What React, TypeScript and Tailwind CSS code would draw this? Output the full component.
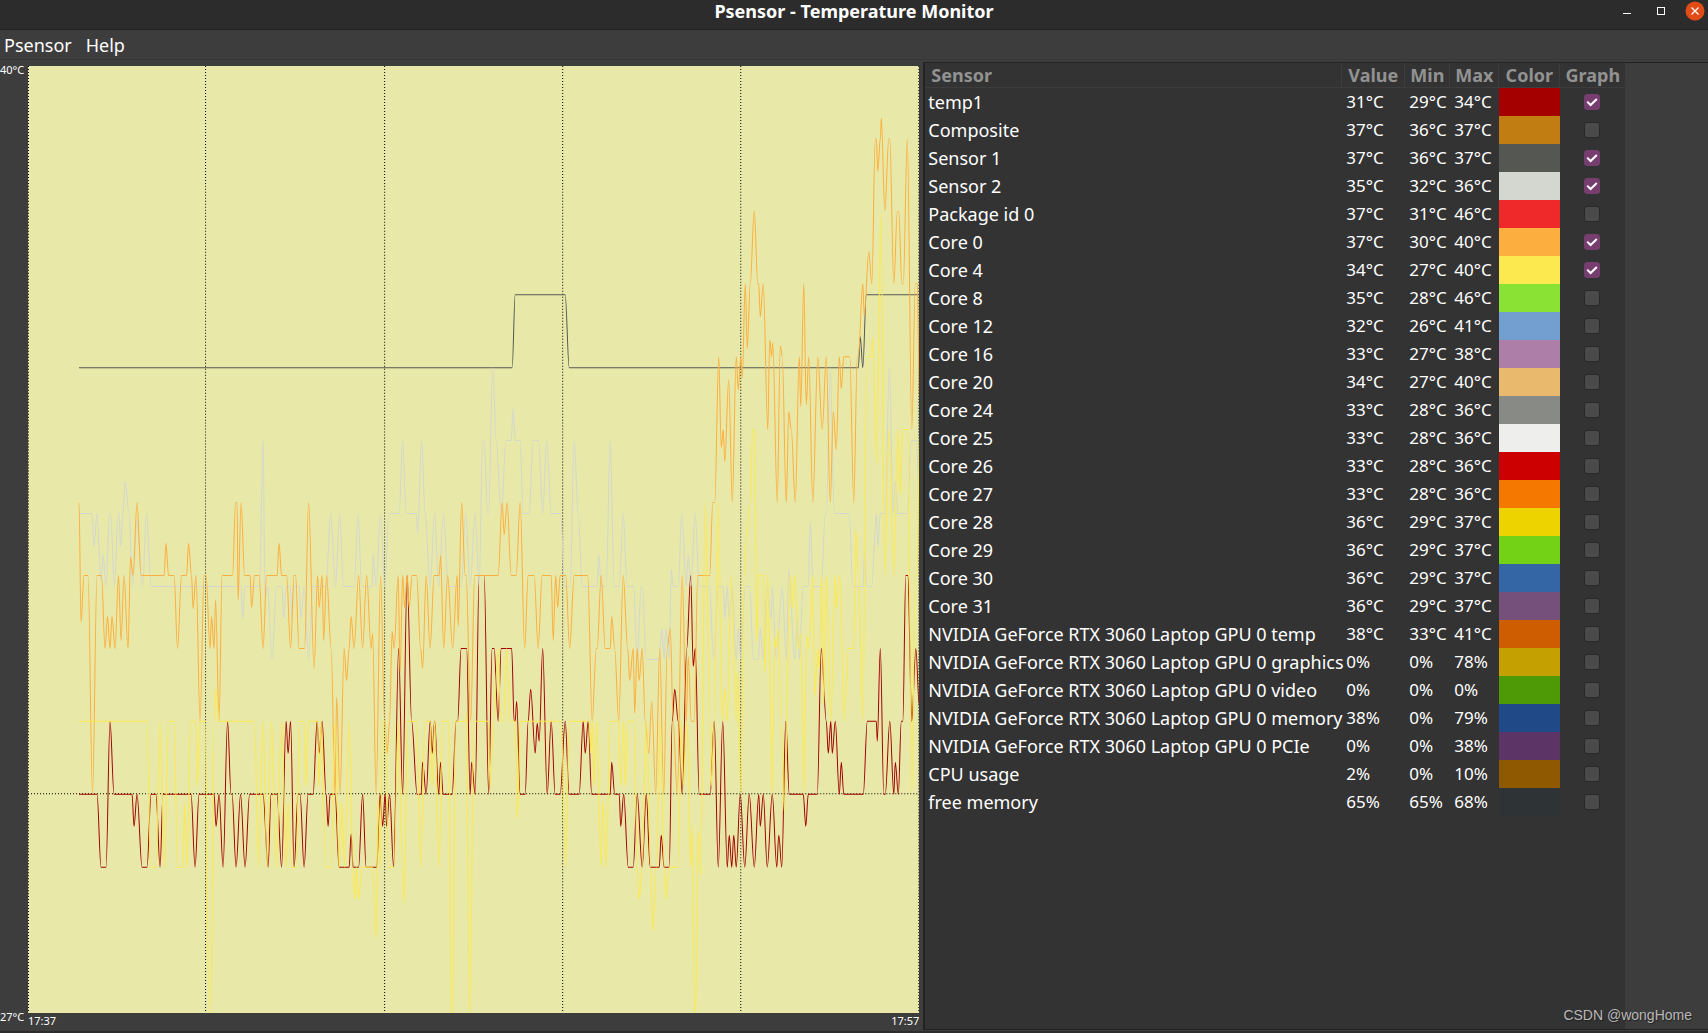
import { useState } from 'react';
import clsx from 'clsx';

type Sensor = {
  name: string;
  value: string;
  min: string;
  max: string;
  color: string;
  graph?: boolean;
};

const initialSensors: Sensor[] = [
  { name: 'temp1', value: '31°C', min: '29°C', max: '34°C', color: 'bg-[#a40000]', graph: true },
  { name: 'Composite', value: '37°C', min: '36°C', max: '37°C', color: 'bg-[#c17d11]' },
  { name: 'Sensor 1', value: '37°C', min: '36°C', max: '37°C', color: 'bg-[#555753]', graph: true },
  { name: 'Sensor 2', value: '35°C', min: '32°C', max: '36°C', color: 'bg-[#d3d7cf]', graph: true },
  { name: 'Package id 0', value: '37°C', min: '31°C', max: '46°C', color: 'bg-[#ef2929]' },
  { name: 'Core 0', value: '37°C', min: '30°C', max: '40°C', color: 'bg-[#fcaf3e]', graph: true },
  { name: 'Core 4', value: '34°C', min: '27°C', max: '40°C', color: 'bg-[#fce94f]', graph: true },
  { name: 'Core 8', value: '35°C', min: '28°C', max: '46°C', color: 'bg-[#8ae234]' },
  { name: 'Core 12', value: '32°C', min: '26°C', max: '41°C', color: 'bg-[#729fcf]' },
  { name: 'Core 16', value: '33°C', min: '27°C', max: '38°C', color: 'bg-[#ad7fa8]' },
  { name: 'Core 20', value: '34°C', min: '27°C', max: '40°C', color: 'bg-[#e9b96e]' },
  { name: 'Core 24', value: '33°C', min: '28°C', max: '36°C', color: 'bg-[#888a85]' },
  { name: 'Core 25', value: '33°C', min: '28°C', max: '36°C', color: 'bg-[#eeeeec]' },
  { name: 'Core 26', value: '33°C', min: '28°C', max: '36°C', color: 'bg-[#cc0000]' },
  { name: 'Core 27', value: '33°C', min: '28°C', max: '36°C', color: 'bg-[#f57900]' },
  { name: 'Core 28', value: '36°C', min: '29°C', max: '37°C', color: 'bg-[#edd400]' },
  { name: 'Core 29', value: '36°C', min: '29°C', max: '37°C', color: 'bg-[#73d216]' },
  { name: 'Core 30', value: '36°C', min: '29°C', max: '37°C', color: 'bg-[#3465a4]' },
  { name: 'Core 31', value: '36°C', min: '29°C', max: '37°C', color: 'bg-[#75507b]' },
  { name: 'NVIDIA GeForce RTX 3060 Laptop GPU 0 temp', value: '38°C', min: '33°C', max: '41°C', color: 'bg-[#ce5c00]' },
  { name: 'NVIDIA GeForce RTX 3060 Laptop GPU 0 graphics', value: '0%', min: '0%', max: '78%', color: 'bg-[#c4a000]' },
  { name: 'NVIDIA GeForce RTX 3060 Laptop GPU 0 video', value: '0%', min: '0%', max: '0%', color: 'bg-[#4e9a06]' },
  { name: 'NVIDIA GeForce RTX 3060 Laptop GPU 0 memory', value: '38%', min: '0%', max: '79%', color: 'bg-[#204a87]' },
  { name: 'NVIDIA GeForce RTX 3060 Laptop GPU 0 PCIe', value: '0%', min: '0%', max: '38%', color: 'bg-[#5c3566]' },
  { name: 'CPU usage', value: '2%', min: '0%', max: '10%', color: 'bg-[#8f5902]' },
  { name: 'free memory', value: '65%', min: '65%', max: '68%', color: 'bg-[#2e3436]' },
];

// Samples as "x,y" pairs in chart units
const series = [
  {
    name: 'temp1',
    stroke: '#a40000',
    points:
      '79,795 97,795 101,868 106,868 110,722 114,795 132,795 134,827 137,795 142,868 147,868 151,795 156,795 160,868 163,795 191,795 195,868 199,795 214,795 216,827 219,795 223,868 227.5,722 231,795 232,795 236,868 240.5,795 245,868 249.5,795 263,795 268,868 271,795 277,795 281.5,868 286,722 288,754 290.5,722 294,868 298,795 300,795 304,868 308,795 313,795 317,722 319,754 322,722 326,795 328,827 330,795 335,795 339,868 349,868 351,835 353,868 358.5,868 362.5,795 366,868 376.5,868 380,795 382.5,827 385,795 386.5,827 389.5,795 393.5,868 398.5,649 402.5,795 407,576 411.5,722 417,795 421,795 422.5,763 426,795 430,722 432,754 434.5,722 438.5,795 440.5,763 443,795 452,795 456,722 457.5,722 461,649 466.5,649 470,795 471.5,763 475,795 479,576 484,576 488.5,795 492,649 494,649 498,722 501,649 511.5,649 514,722 515,722 516.5,702 520,795 525,795 528,722 530.5,690 535,754 537,724 539,742 542.5,649 547,795 551,722 555,795 560,795 565,722 569,795 579,795 583,722 585,754 588,722 591.5,795 610,795 611.5,763 614.5,795 619,795 620.5,827 623.5,795 628,868 633,868 637,795 642,868 646,795 650,868 659,868 661,836 664,868 669,868 672,722 674.5,690 678,722 682,795 686.5,649 690.5,576 693,667 695,649 699,795 710,795 714,722 718,868 722.5,722 727,868 729,836 731.5,868 733.5,836 736,868 740,795 744.5,868 749,795 754,868 758.5,795 760,827 763,795 767,868 772,795 776.5,868 778.5,836 781.5,868 785.5,722 789,795 803,795 805.5,827 808,795 817,795 821,649 826,722 828,754 830.5,722 832,754 835,722 839,795 841,763 843.5,795 863,795 867,722 876,722 877,742 880,649 883.5,795 885,795 889.5,722 893.5,795 895,763 898,795 901,722 902.5,722 905.5,576 907.5,576 911.5,722 915.5,649 919,707',
  },
  {
    name: 'Sensor 1',
    stroke: '#555753',
    points: '79,368 512,368 515,295 565,295 569,368 858,368 860,337 862.5,368 866,295 919,295',
  },
  {
    name: 'Sensor 2',
    stroke: '#d3d7cf',
    points:
      '79,514 92,514 94,547 97,514 101,582 103,555 106,587 109.5,514 110.5,514 114.5,587 118,514 119,514 120.5,547 123,514 125,482 129,514 132.5,587 137,520 142.5,587 146.5,514 151,587 241,587 242.5,619 245,587 259.5,587 263,441 265,599 267.5,587 272,660 276.5,587 282,587 283.5,619 286,587 290,587 292,619 294,587 299,587 301,619 304,587 308.5,660 312.5,587 326,587 330.5,514 335.5,587 339.5,514 343.5,587 354,587 358,514 361.5,587 372,587 373,555 376,587 380.5,514 384.5,587 389,514 399,514 402.5,441 406,514 416,514 417.5,534 421.5,441 425,514 430,587 434.5,514 438.5,587 443.5,514 448,587 461,587 465.5,514 470,587 475,514 479,587 482.5,441 484,441 487.5,514 488.5,514 492.5,368 496,441 501,514 506,441 511,441 513,409 515,441 520,441 523,514 529,514 533,441 538.5,441 542.5,514 546.5,441 551,514 560.5,514 564.5,587 570,587 574,441 578,514 582,587 597,587 598.5,555 601,587 606,587 610,441 614,587 619,587 623,514 627,587 633.5,587 637,660 641,587 642,587 646,660 659,660 661.5,629 664,660 665.5,629 669,660 671,570 673,587 678,587 681.5,514 686,587 688,555 690.5,587 695,514 699,587 709,587 713.5,660 718,587 723,587 724.5,619 727,587 729,620 732,587 736,660 738,629 740.5,660 745,587 749.5,587 753,660 758,660 760,629 762.5,660 767,587 771,619 772,587 776,660 782,587 786,660 788.5,570 794.5,660 797,619 799,660 803,587 808,587 810,523 813,587 821,587 825,514 826,514 830,368 834,514 849,514 852.5,587 863,587 864,555 866.5,587 871.5,587 876,514 877.5,547 880,514 885,514 889,368 893,514 895,482 898,514 907,514 911,441 916,441 919,500',
  },
  {
    name: 'Core 0',
    stroke: '#fcaf3e',
    points:
      '79,503 81,623 84,576 88,576 92.5,795 97,576 101.5,576 105,649 107.5,617 110,649 112,617 115,649 118.5,576 121,641 124,576 128,649 130.5,558 133,576 137,503 141,576 164,576 166,544 168.5,576 174,576 177.5,649 181.5,576 186.5,576 188.5,544 191.5,576 193,609 196,576 200,722 204,576 206,576 210,649 211.5,617 214,649 215.5,600 219,722 222,576 232.5,576 235.5,503 237,503 238,601 241,503 244.5,576 250,576 251.5,608 254.5,576 259,576 263,649 266.5,576 277,576 279,544 281.5,576 286.5,576 290.5,649 294,576 295.5,576 299,649 304.5,649 308.5,503 314,669 317.5,576 319,608 322,576 323.5,641 326.5,576 331,649 335,795 336.5,698 340,795 344,649 346.5,681 349,649 351,617 354,649 358.5,576 362.5,649 366.5,576 371,649 372.5,634 376,795 380.5,576 384.5,722 387,754 389.5,722 392,632 394,649 398,576 400,673 402.5,576 404.5,608 407,576 409,608 412,576 416.5,576 420.5,649 422.5,669 426,576 430,649 434,576 439,576 440.5,556 443.5,649 447.5,576 452.5,649 457,576 458,627 461.5,503 465,576 466,576 470.5,722 474.5,576 498,576 502,503 504,535 507,503 511,576 516,576 520,503 524.5,649 528,576 534,576 538,649 542,576 551,576 553,641 555.5,576 557.5,608 560,576 565.5,576 569.5,649 574,576 587.5,576 592,722 596,649 597,649 601,576 605,649 610,649 611.5,617 614.5,649 618.5,722 623,576 627.5,649 629.5,681 633,649 634.5,714 637,649 639,681 642,649 645,722 648.5,754 651.5,702 655.5,795 659.5,649 663.5,795 667,649 670,629 673,722 677,795 682,576 686,722 688,657 691,722 694,722 697.5,576 709.5,576 712.5,503 714.5,503 718.5,357 721,448 723,430 724.5,462 728.5,380 732,503 736,357 738,390 740.5,357 742,378 745,284 747,349 750,284 754,211 757.5,284 758.5,284 760,317 763,284 767.5,430 769.5,340 771.5,357 772.5,343 777,503 780,346 782,357 786,503 788.5,412 791,430 795,503 799,357 800.5,407 803.5,284 806,405 808.5,357 812.5,503 817.5,357 822,430 826,357 830,503 833,412 836,450 839,357 841,389 843.5,357 849.5,357 853.5,503 857,357 858,357 862.5,284 864,316 868.5,252 871.5,284 875,139 876,139 877.5,171 880,139 881,118 884.5,211 888.5,139 889.5,139 893.5,284 897,212 898.5,212 901.5,284 903,284 907,139 911.5,430 915,284 917,284 919,400',
  },
  {
    name: 'Core 4',
    stroke: '#fce94f',
    points:
      '79,722 147,722 150.5,868 156,868 160,722 164.5,868 168.5,722 174,722 177.5,868 183,868 184.5,803 187,868 190.5,722 195.5,722 197.5,787 200,722 205,722 209,1014 211,1014 214,722 216,690 219,722 254.5,722 258.5,868 263,722 267,868 271.5,722 276,868 281.5,722 286,868 288,803 291,868 296,868 299.5,722 304,722 305.5,787 308.5,722 317.5,722 319,787 321,722 325.5,868 331,868 335,722 339,868 341.5,803 344.5,868 349,722 353,868 354.5,900 356.5,868 358.5,900 362,868 372.5,868 376,939 378,800 380,868 382.5,722 385,722 388.5,868 394,868 398,722 402.5,868 404,905 407.5,722 416.5,722 420.5,868 425,722 430,722 432,787 434.5,722 439,868 442.5,722 448.5,722 451,1014 453,1014 455,722 466,722 466.5,713 469,1014 470,1014 473.5,722 488,722 490,787 493.5,722 498,649 500.5,722 503.5,722 506.5,649 510,722 515,722 517.5,819 520,722 561,722 565.5,868 569,722 589,722 590.5,754 592,722 594,787 596.5,722 601,868 602.5,803 606,868 610,722 618,722 620.5,787 623.5,722 625,787 628,722 634,722 637,868 639,900 642,868 646,722 650.5,868 652.5,932 656,868 660,722 664,868 666,900 669,868 678,868 681,722 683.5,787 687,722 690.5,868 692,827 694.5,1014 695.5,1014 698,832 700.5,876 705,503 710,722 711,787 714,722 718,503 722,722 724.5,690 727,722 731,576 736,722 737.5,672 740.5,795 744,576 746,541 750,503 752.5,430 754.5,430 756.5,642 758.5,576 763.5,576 764.5,673 767.5,576 772,795 774.5,637 776,649 778,629 781,722 784,813 790,576 792,609 794.5,576 798,649 800.5,634 803.5,795 806.5,637 808.5,649 812.5,576 814.5,697 817.5,650 819,669 821.5,576 823.5,705 826,576 830.5,722 835,576 836,609 839.5,576 844,722 848,649 853.5,649 855.5,530 858,576 862.5,722 866.5,357 871,357 872.5,338 876.5,465 880.5,213 884.5,576 888.5,430 893.5,576 897.5,430 900,495 902.5,430 907.5,430 911.5,795 915,576 917,576 919,430',
  },
];

const gridX = [28, 205, 384, 562, 740, 918];

// Joins the samples with curves that flatten out at every sample
const toPath = (points: string) => {
  const pts = points.split(' ').map((p) => p.split(',').map(Number));
  return pts
    .map(([x, y], i) => {
      if (i === 0) return `M${x} ${y}`;
      const [px, py] = pts[i - 1];
      if (py === y) return `L${x} ${y}`;
      const d = (x - px) * 0.35;
      return `C${px + d} ${py} ${x - d} ${y} ${x} ${y}`;
    })
    .join('');
};

const TitleBar = () => (
  <header className="grid h-[30px] shrink-0 grid-cols-[1fr_auto_1fr] border-b border-[#222222] bg-[#2c2c2c]">
    <h1 className="col-start-2 text-lg leading-[22px] font-bold">Psensor - Temperature Monitor</h1>
    <div className="flex items-start justify-end gap-[14px] pt-px pr-[3px]">
      <button aria-label="Minimize" className="h-5 w-5">
        <svg viewBox="0 0 20 20" className="h-5 w-5">
          <rect x="6" y="12" width="8" height="1" fill="#fff" />
        </svg>
      </button>
      <button aria-label="Maximize" className="h-5 w-5">
        <svg viewBox="0 0 20 20" className="h-5 w-5">
          <rect x="6.5" y="6.5" width="7" height="7" fill="none" stroke="#fff" />
        </svg>
      </button>
      <button aria-label="Close" className="h-5 w-5">
        <svg viewBox="0 0 20 20" className="h-5 w-5">
          <circle cx="10" cy="10" r="9.5" fill="#e04b16" />
          <path d="M6.5 6.5l7 7M13.5 6.5l-7 7" stroke="#fff" strokeWidth="1.3" />
        </svg>
      </button>
    </div>
  </header>
);

const Chart = () => (
  <section className="flex w-[54%] flex-col pt-[6px] pr-[3px]">
    <div className="flex min-h-0 flex-1">
      <div className="flex w-7 shrink-0 flex-col justify-between text-[11px] leading-[8px] whitespace-nowrap">
        <span>40°C</span>
        <span className="-mb-2">27°C</span>
      </div>
      <svg
        viewBox="28 66 891 948"
        preserveAspectRatio="none"
        className="h-full min-w-0 flex-1 bg-[#e8e8a8]"
        role="img"
        aria-label="Temperature graph"
      >
        <g stroke="#000" strokeWidth="1" strokeDasharray="1 2">
          {gridX.map((x) => (
            <path key={x} d={`M${x + 0.5} 66V1014`} />
          ))}
          <path d="M28 794.5H919" />
        </g>
        {series.map((s) => (
          <path key={s.name} d={toPath(s.points)} fill="none" stroke={s.stroke} strokeWidth="1" />
        ))}
      </svg>
    </div>
    <div className="flex h-[18px] justify-between pt-[4px] pl-7 text-[11px] leading-[8px]">
      <span>17:37</span>
      <span>17:57</span>
    </div>
  </section>
);

const headCell = 'border-r border-b border-[#3d3d3d] p-0 text-center font-bold';

export default function App() {
  const [sensors, setSensors] = useState(initialSensors);

  const toggleGraph = (name: string) => {
    setSensors(sensors.map((s) => (s.name === name ? { ...s, graph: !s.graph } : s)));
  };

  return (
    <div className="relative flex h-screen flex-col overflow-hidden bg-[#3d3d3d] font-['Noto_Sans',sans-serif] text-white">
      <TitleBar />

      <nav className="flex h-[30px] shrink-0 items-center gap-[14px] border-b border-[#383838] px-1 text-lg leading-6">
        <button>Psensor</button>
        <button>Help</button>
      </nav>

      <main className="flex min-h-0 flex-1 border-b-2 border-[#2c2c2c]">
        <Chart />

        <section className="mt-[2px] mb-px ml-px min-w-0 flex-1 border-y border-l-2 border-[#232323]">
          <div className="h-full w-[700px] bg-[#333333]">
            <table className="w-full table-fixed border-separate border-spacing-0 text-[17px] leading-6">
              <colgroup>
                <col className="w-[417px]" />
                <col className="w-[63px]" />
                <col className="w-[45px]" />
                <col className="w-[49px]" />
                <col className="w-[61px]" />
                <col className="w-[65px]" />
              </colgroup>
              <thead className="text-lg leading-6 text-[#929292]">
                <tr className="h-[25px]">
                  <th className="border-r border-b border-[#3d3d3d] p-0 pl-[6px] text-left font-bold">Sensor</th>
                  <th className={headCell}>Value</th>
                  <th className={headCell}>Min</th>
                  <th className={headCell}>Max</th>
                  <th className={headCell}>Color</th>
                  <th className="border-b border-[#3d3d3d] p-0 text-center font-bold">Graph</th>
                </tr>
              </thead>
              <tbody>
                {sensors.map((s) => (
                  <tr key={s.name} className="h-7 whitespace-nowrap">
                    <td className="p-0 pl-[3px] text-lg leading-6">{s.name}</td>
                    <td className="p-0 pl-1">{s.value}</td>
                    <td className="p-0 pl-1">{s.min}</td>
                    <td className="p-0 pl-1">{s.max}</td>
                    <td className={clsx('p-0', s.color)} />
                    <td className="p-0 pr-[2px]">
                      <label className="relative mx-auto block h-4 w-4">
                        <input
                          type="checkbox"
                          aria-label={`Graph ${s.name}`}
                          checked={!!s.graph}
                          onChange={() => toggleGraph(s.name)}
                          className="block h-4 w-4 appearance-none rounded-[3px] border border-[#282828] bg-[#4a4a4a] checked:border-[#763e6f] checked:bg-[#763e6f]"
                        />
                        {s.graph && (
                          <svg viewBox="0 0 16 16" className="pointer-events-none absolute inset-0 h-4 w-4">
                            <path d="M3.2 7.6l3.4 3.4 6.2-6" fill="none" stroke="#fff" strokeWidth="2" />
                          </svg>
                        )}
                      </label>
                    </td>
                  </tr>
                ))}
              </tbody>
            </table>
          </div>
        </section>
      </main>

      <p className="absolute right-4 bottom-2 font-['Liberation_Sans',sans-serif] text-sm leading-5 text-[#b8b8b8] [text-shadow:1px_1px_1px_#222]">
        CSDN @wongHome
      </p>
    </div>
  );
}
